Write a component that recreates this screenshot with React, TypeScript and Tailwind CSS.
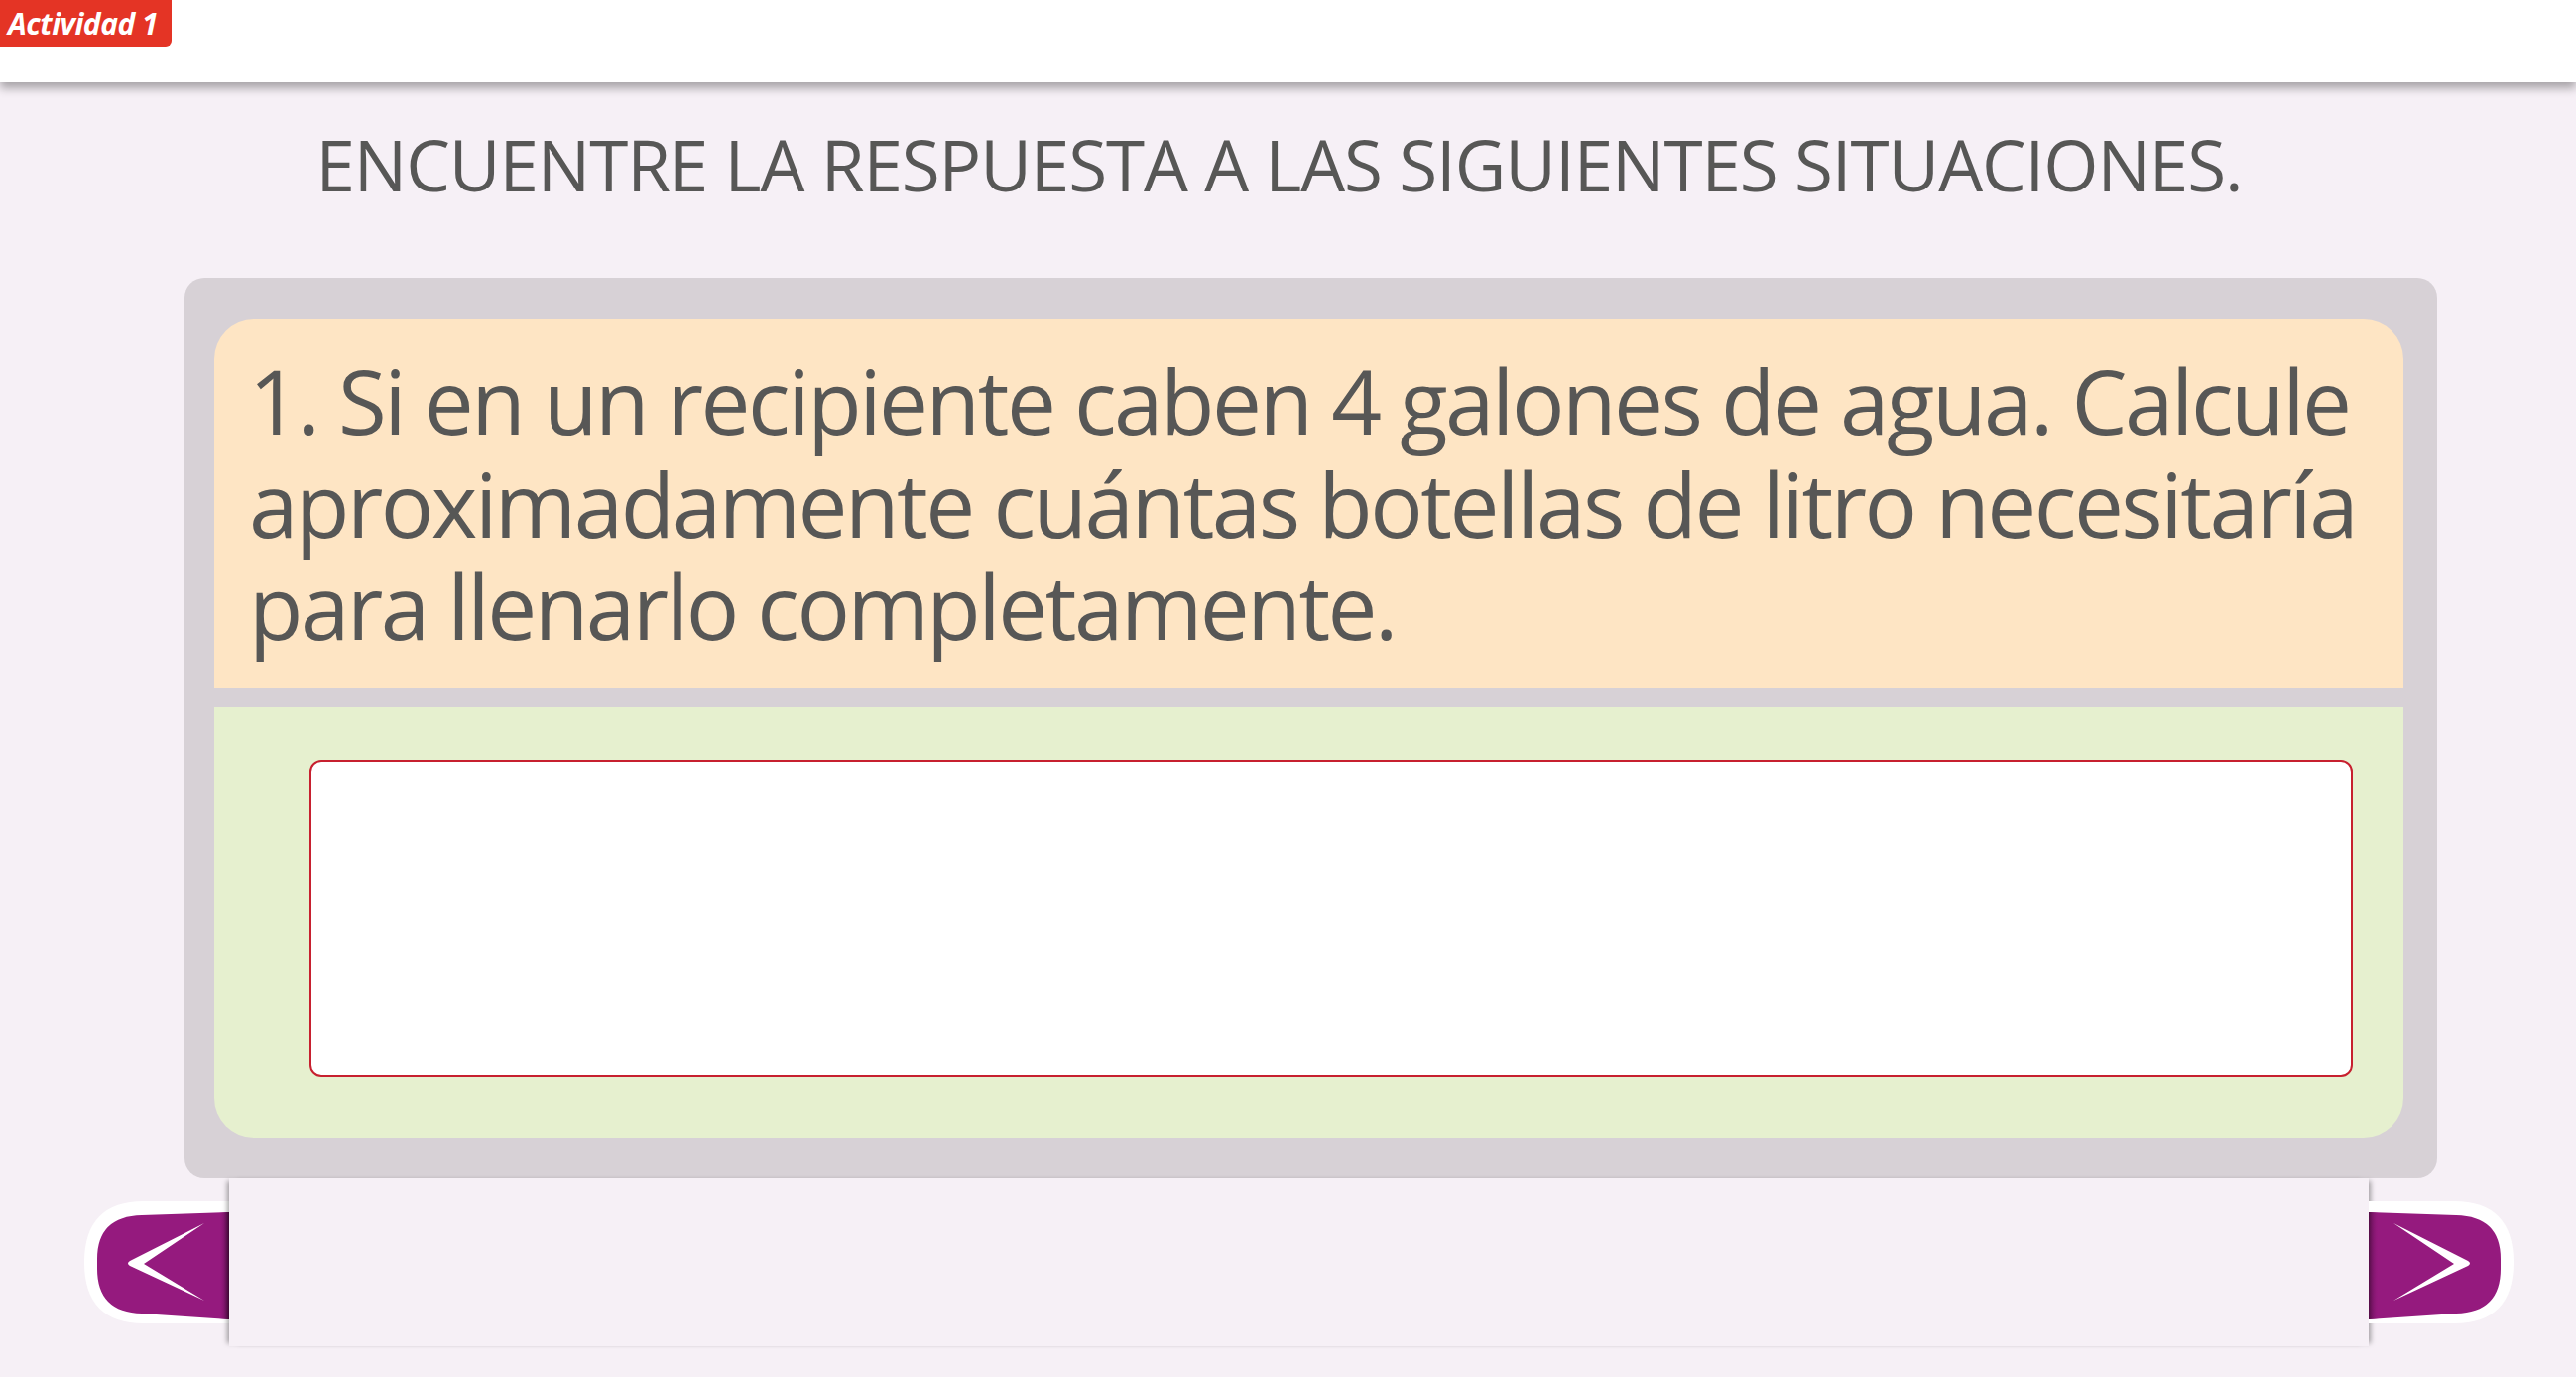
import React from "react";

function NavButton({ flip }: { flip?: boolean }) {
  return (
    <svg
      width="146"
      height="123"
      viewBox="0 0 146 123"
      className={flip ? "block -scale-x-100" : "block"}
    >
      <defs>
        <linearGradient id={flip ? "fadeR" : "fadeL"} x1="0" x2="1" y1="0" y2="0">
          <stop offset="0" stopColor="#951a7e" stopOpacity="0" />
          <stop offset="1" stopColor="#4a0b3e" stopOpacity="0.9" />
        </linearGradient>
      </defs>
      <path d="M146,0 L60,0 Q0,0 0,61.5 Q0,123 60,123 L146,123 Z" fill="#ffffff" />
      <path
        d="M146,11 L58,14 Q13,15 13,58 L13,68 Q13,112 58,113 L146,119 Z"
        fill="#951a7e"
      />
      <rect x="136" y="11" width="10" height="108" fill={`url(#${flip ? "fadeR" : "fadeL"})`} />
      <path d="M121,22 L46,60 Q42,62.5 46,65 L121,100 L60,63 Z" fill="#ffffff" />
    </svg>
  );
}

export default function App() {
  const font = { fontFamily: '"Open Sans", "Noto Sans", sans-serif' };
  return (
    <div className="w-full h-[1388px] overflow-hidden bg-[#f6f0f6]" style={font}>
      <header className="relative z-10 h-[83px] bg-white shadow-[0_6px_9px_rgba(0,0,0,0.32)]">
        <div className="absolute left-0 top-0 h-[47px] w-[173px] rounded-br-[6px] bg-[#e43425] flex items-center pl-[8px]">
          <span className="text-white font-bold italic text-[30px] leading-none tracking-[-0.5px]">
            Actividad 1
          </span>
        </div>
      </header>

      <h1 className="mt-[47px] pr-[18px] text-center text-[71px] leading-[71px] text-[#575756] font-normal tracking-[-1.1px] whitespace-nowrap">
        ENCUENTRE LA RESPUESTA A LAS SIGUIENTES SITUACIONES.
      </h1>

      <div className="ml-[186px] mt-[79px] w-[2271px] rounded-[20px] bg-[#d7d1d6] pt-[42px] pl-[30px] pr-[34px] pb-[40px]">
        <div className="rounded-t-[40px] bg-[#fee5c4] pt-[30px] pb-[31px] pl-[35px] text-[89px] leading-[103.5px] text-[#575756] tracking-[-2.5px] whitespace-nowrap">
          <div>1. Si en un recipiente caben 4 galones de agua. Calcule</div>
          <div>aproximadamente cuántas botellas de litro necesitaría</div>
          <div>para llenarlo completamente.</div>
        </div>
        <div className="mt-[19px] rounded-b-[40px] bg-[#e6f0cf] pt-[53px] pb-[61px] pl-[96px] pr-[51px]">
          <div className="h-[320px] rounded-[12px] border-2 border-[#c7202f] bg-white" />
        </div>
      </div>

      <div className="flex pl-[85px]">
        <div className="pt-[24px]">
          <NavButton />
        </div>
        <div className="relative h-[170px] w-[2157px] bg-[#f6f0f6] shadow-[-5px_0_5px_-3px_rgba(0,0,0,0.35),5px_0_5px_-3px_rgba(0,0,0,0.35)]" />
        <div className="pt-[24px]">
          <NavButton flip />
        </div>
      </div>
    </div>
  );
}
